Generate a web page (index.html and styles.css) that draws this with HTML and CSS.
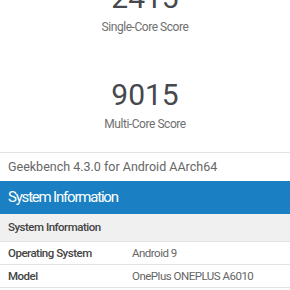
FILE: index.html
```html
<html>
  <head>
    <link rel="stylesheet" href="styles.css">
  </head>
  <body>
    <div class="scores">
      <div class="score">
        <div class="score__value">2415</div>
        <div class="score__label">Single-Core Score</div>
      </div>
      <div class="score">
        <div class="score__value">9015</div>
        <div class="score__label">Multi-Core Score</div>
      </div>
    </div>

    <div class="version">Geekbench 4.3.0 for Android AArch64</div>

    <div class="section-head">System Information</div>

    <table class="info">
      <tr class="info__group">
        <td colspan="2">System Information</td>
      </tr>
      <tr>
        <td class="info__name">Operating System</td>
        <td class="info__value">Android 9</td>
      </tr>
      <tr>
        <td class="info__name">Model</td>
        <td class="info__value">OnePlus ONEPLUS A6010</td>
      </tr>
    </table>
  </body>
</html>
```

FILE: styles.css
```css
body {
  margin: 0;
  font-family: Roboto, "Liberation Sans", sans-serif;
  background: #fff;
  overflow: hidden;
}

.scores {
  margin-top: -20px;
  padding-bottom: 20px;
  border-bottom: 1px solid #e2e2e2;
  display: flex;
  flex-direction: column;
  gap: 42px;
}
.score {
  text-align: center;
}
.score__value {
  font-size: 30px;
  line-height: 36px;
  color: #45484c;
}
.score__label {
  margin-top: 3px;
  font-size: 12px;
  line-height: 16px;
  letter-spacing: -0.45px;
  color: #707070;
}

.version {
  padding: 6px 8px;
  font-size: 12.5px;
  line-height: 16px;
  color: #666;
}

.section-head {
  background: #1b7fc3;
  color: #fff;
  font-size: 15px;
  line-height: 33px;
  letter-spacing: -1.2px;
  padding: 0 8px;
}

.info {
  width: 100%;
  border-collapse: collapse;
  font-size: 11.5px;
  letter-spacing: -0.5px;
}
.info td {
  padding: 3px 8px;
  line-height: 16px;
  border-bottom: 1px solid #e2e2e2;
}
.info__group td {
  background: #f0f0f0;
  padding: 5px 8px 6px;
  font-weight: 500;
  color: #444;
}
.info__name {
  width: 108px;
  font-weight: 500;
  color: #444;
}
.info__value {
  color: #666;
}
```
